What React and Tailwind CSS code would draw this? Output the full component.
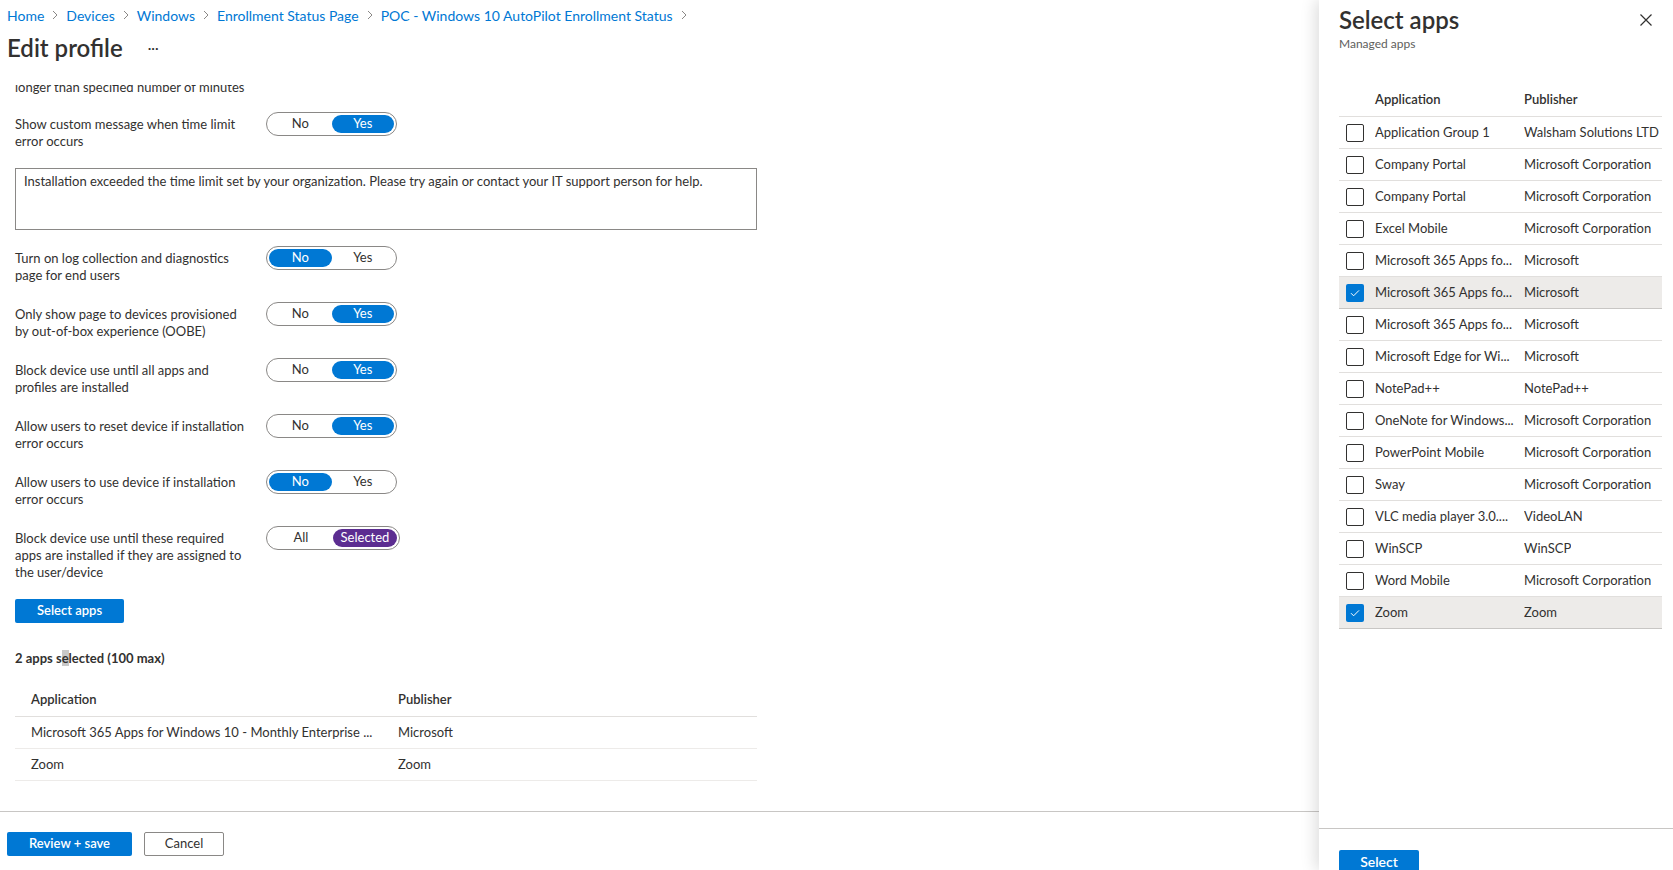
import React from "react";

const crumbs = [
  "Home",
  "Devices",
  "Windows",
  "Enrollment Status Page",
  "POC - Windows 10 AutoPilot Enrollment Status",
];

const settings = [
  {
    label: "Turn on log collection and diagnostics page for end users",
    options: ["No", "Yes"],
    value: "No",
  },
  {
    label: "Only show page to devices provisioned by out-of-box experience (OOBE)",
    options: ["No", "Yes"],
    value: "Yes",
  },
  {
    label: "Block device use until all apps and profiles are installed",
    options: ["No", "Yes"],
    value: "Yes",
  },
  {
    label: "Allow users to reset device if installation error occurs",
    options: ["No", "Yes"],
    value: "Yes",
  },
  {
    label: "Allow users to use device if installation error occurs",
    options: ["No", "Yes"],
    value: "No",
  },
];

const managedApps = [
  { name: "Application Group 1", publisher: "Walsham Solutions LTD" },
  { name: "Company Portal", publisher: "Microsoft Corporation" },
  { name: "Company Portal", publisher: "Microsoft Corporation" },
  { name: "Excel Mobile", publisher: "Microsoft Corporation" },
  { name: "Microsoft 365 Apps fo...", publisher: "Microsoft" },
  { name: "Microsoft 365 Apps fo...", publisher: "Microsoft", checked: true },
  { name: "Microsoft 365 Apps fo...", publisher: "Microsoft" },
  { name: "Microsoft Edge for Wi...", publisher: "Microsoft" },
  { name: "NotePad++", publisher: "NotePad++" },
  { name: "OneNote for Windows...", publisher: "Microsoft Corporation" },
  { name: "PowerPoint Mobile", publisher: "Microsoft Corporation" },
  { name: "Sway", publisher: "Microsoft Corporation" },
  { name: "VLC media player 3.0....", publisher: "VideoLAN" },
  { name: "WinSCP", publisher: "WinSCP" },
  { name: "Word Mobile", publisher: "Microsoft Corporation" },
  { name: "Zoom", publisher: "Zoom", checked: true },
];

const Chevron = () => (
  <svg width="8" height="12" viewBox="0 0 8 12" className="text-[#8a8886]">
    <path d="M2 2l4 4-4 4" fill="none" stroke="currentColor" strokeWidth="1" />
  </svg>
);

// pill switch used by every setting row
const Toggle = ({ options, value, purple }) => (
  <div
    className={
      purple
        ? "flex h-[24px] w-[134px] shrink-0 items-center rounded-full border border-[#8a8886] p-[2px] text-[13px]"
        : "flex h-[24px] w-[131px] shrink-0 items-center rounded-full border border-[#8a8886] p-[2px] text-[13px]"
    }
  >
    {options.map((opt) => (
      <span
        key={opt}
        className={
          opt === value
            ? purple
              ? "flex h-[18px] flex-1 items-center justify-center rounded-full bg-[#5c2d91] text-white"
              : "flex h-[18px] flex-1 items-center justify-center rounded-full bg-[#0078d4] text-white"
            : "flex h-[18px] flex-1 items-center justify-center text-[#323130]"
        }
      >
        {opt}
      </span>
    ))}
  </div>
);

const SettingRow = ({ label, options, value, purple, className }) => (
  <div className={`flex items-start ${className}`}>
    <div className="mt-[4px] w-[234px] text-[13px] leading-[17px] text-[#323130]">
      {label}
    </div>
    <div className="ml-[17px]">
      <Toggle options={options} value={value} purple={purple} />
    </div>
  </div>
);

const Checkbox = ({ checked }) =>
  checked ? (
    <span className="flex h-[18px] w-[18px] items-center justify-center rounded-[2px] bg-[#0078d4]">
      <svg width="12" height="12" viewBox="0 0 12 12">
        <path d="M2 6.2l2.6 2.6L10 3.4" fill="none" stroke="#fff" strokeWidth="1" />
      </svg>
    </span>
  ) : (
    <span className="h-[18px] w-[18px] rounded-[2px] border border-[#323130] bg-white" />
  );

const EditProfile = () => (
  <div className="flex min-w-0 flex-1 flex-col">
    {/* Breadcrumb + title */}
    <div className="px-[7px]">
      <div className="flex h-[20px] items-center gap-[7px] pt-[10px] text-[14px] text-[#0078d4]">
        {crumbs.map((c) => (
          <React.Fragment key={c}>
            <span>{c}</span>
            <Chevron />
          </React.Fragment>
        ))}
      </div>
      <div className="mt-[12px] flex h-[32px] items-center">
        <h1 className="text-[24px] font-semibold leading-[32px] text-[#323130]">Edit profile</h1>
        <span className="ml-[25px] text-[14px] leading-none text-[#323130]">···</span>
      </div>
    </div>

    {/* Scrolling settings */}
    <div className="mt-[21px] flex-1 overflow-hidden px-[15px]">
      <div className="-mt-[6px] text-[13px] leading-[17px] text-[#323130]">
        longer than specified number of minutes
      </div>

      <SettingRow
        className="mt-[16px]"
        label="Show custom message when time limit error occurs"
        options={["No", "Yes"]}
        value="Yes"
      />

      <div className="mt-[18px] h-[62px] w-[742px] border border-[#8a8886] px-[8px] py-[4px] text-[13px] leading-[17px] text-[#323130]">
        Installation exceeded the time limit set by your organization. Please try again or contact your IT support person for help.
      </div>

      {settings.map((s, i) => (
        <SettingRow
          key={s.label}
          className={i === 0 ? "mt-[16px]" : "mt-[18px]"}
          label={s.label}
          options={s.options}
          value={s.value}
        />
      ))}

      <SettingRow
        className="mt-[18px]"
        label="Block device use until these required apps are installed if they are assigned to the user/device"
        options={["All", "Selected"]}
        value="Selected"
        purple
      />

      <button className="mt-[18px] h-[24px] w-[109px] rounded-[2px] bg-[#0078d4] text-[13px] font-semibold text-white">
        Select apps
      </button>

      <div className="mt-[27px] text-[13px] font-bold leading-[17px] text-[#323130]">
        2 apps s<span className="bg-[#c8c8c8]">e</span>lected (100 max)
      </div>

      {/* Chosen apps */}
      <div className="mt-[16px] w-[742px] text-[13px] text-[#323130]">
        <div className="flex h-[34px] items-center border-b border-[#e1dfdd] font-semibold">
          <span className="w-[383px] pl-[16px]">Application</span>
          <span>Publisher</span>
        </div>
        <div className="flex h-[32px] items-center border-b border-[#edebe9]">
          <span className="w-[383px] pl-[16px]">Microsoft 365 Apps for Windows 10 - Monthly Enterprise ...</span>
          <span>Microsoft</span>
        </div>
        <div className="flex h-[32px] items-center border-b border-[#edebe9]">
          <span className="w-[383px] pl-[16px]">Zoom</span>
          <span>Zoom</span>
        </div>
      </div>
    </div>

    {/* Footer */}
    <div className="h-[59px] border-t border-[#c8c6c4] px-[7px] pt-[20px]">
      <div className="flex gap-[12px]">
        <button className="h-[24px] w-[125px] rounded-[2px] bg-[#0078d4] text-[13px] font-semibold text-white">
          Review + save
        </button>
        <button className="h-[24px] w-[80px] rounded-[2px] border border-[#8a8886] bg-white text-[13px] text-[#323130]">
          Cancel
        </button>
      </div>
    </div>
  </div>
);

const SelectAppsPanel = () => (
  <div className="relative z-10 flex w-[354px] shrink-0 flex-col bg-white shadow-[-4px_0_14px_rgba(0,0,0,0.13)]">
    <div className="flex-1 pl-[20px] pr-[11px]">
      <div className="flex items-start justify-between">
        <div>
          <h2 className="pt-[4px] text-[24px] font-semibold leading-[32px] text-[#323130]">Select apps</h2>
          <div className="text-[12px] leading-[16px] text-[#605e5c]">Managed apps</div>
        </div>
        <svg width="14" height="14" viewBox="0 0 14 14" className="mr-[9px] mt-[13px]">
          <path d="M1.5 1.5l11 11M12.5 1.5l-11 11" stroke="#323130" strokeWidth="1.2" />
        </svg>
      </div>

      <div className="mt-[31px] text-[13px] text-[#323130]">
        <div className="flex h-[34px] items-center border-b border-[#e1dfdd] font-semibold">
          <span className="w-[185px] pl-[36px]">Application</span>
          <span>Publisher</span>
        </div>
        {managedApps.map((app, i) => (
          <div
            key={i}
            className={
              app.checked
                ? "flex h-[32px] items-center border-b border-[#c8c6c4] bg-[#edebe9]"
                : "flex h-[32px] items-center border-b border-[#e1dfdd]"
            }
          >
            <span className="flex w-[36px] pl-[7px]">
              <Checkbox checked={app.checked} />
            </span>
            <span className="w-[149px] truncate">{app.name}</span>
            <span className="truncate">{app.publisher}</span>
          </div>
        ))}
      </div>
    </div>

    <div className="h-[42px] border-t border-[#c8c6c4] pl-[20px] pt-[20px]">
      <button className="h-[24px] w-[80px] rounded-[2px] bg-[#0078d4] text-[14px] font-semibold text-white">
        Select
      </button>
    </div>
  </div>
);

export default function App() {
  return (
    <div className="flex h-[870px] w-full overflow-hidden bg-white font-['Segoe_UI',Lato,'Noto_Sans',sans-serif]">
      <EditProfile />
      <SelectAppsPanel />
    </div>
  );
}
